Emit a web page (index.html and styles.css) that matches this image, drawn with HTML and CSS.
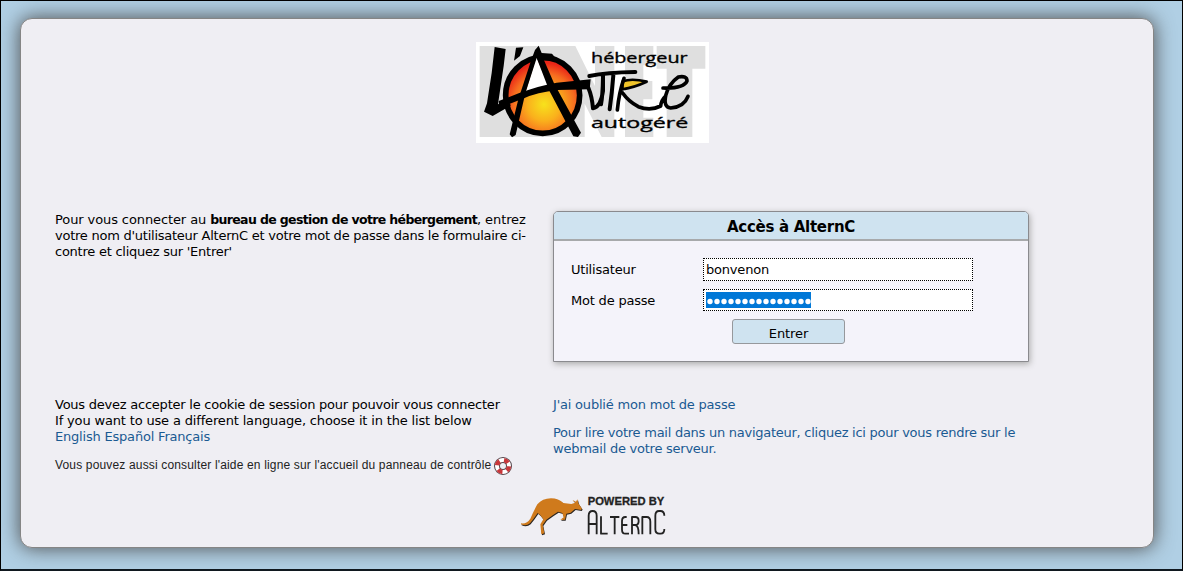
FILE: index.html
```html
<!DOCTYPE html>
<html lang="fr">
<head>
<meta charset="utf-8">
<title>Accès à AlternC</title>
<link rel="stylesheet" href="styles.css">
</head>
<body>
<main class="panel">
  <header class="brand">
    <svg class="logo" viewBox="18 18 699 303" role="img" aria-label="L'Autre Net">
      <defs>
        <radialGradient id="sun" gradientUnits="userSpaceOnUse" cx="222" cy="205" r="125">
          <stop offset="0" stop-color="#f7e21c"/><stop offset=".4" stop-color="#fab01c"/><stop offset=".75" stop-color="#f66b20"/><stop offset="1" stop-color="#e92517"/>
        </radialGradient>
      </defs>
      <path fill="#fff" d="M18 18h699v303H18z"/>
      <path fill="#dfdfdf" d="M29 30H316L375 150V30H433V303H395L344 203V303H29zM465 30H550V88H520V135H547V190H520V245H550V303H465zM560 30H706V98H667V303H590V98H560z"/>
      <ellipse cx="218" cy="178" rx="111" ry="114" fill="url(#sun)" stroke="#000" stroke-width="17"/>
      <path fill="#fff" d="M199 62L236 150L167 168z"/>
      <path d="M74 33L107 39L101 90L84 205L112 195L123 208L68 240L42 227L51 202L65 111zM138 35L160 34L150 60L132 74z"/>
      <path d="M184 71L195 42L206 29L215 51L246 53L262 73L222 73L252 142L333 290L324 303L310 301L238 164L200 66L166 172L137 297L126 304L119 295L145 190z"/>
      <path d="M86 195L146 172Q210 148 260 140L362 130L359 160L263 162Q200 169 162 187L88 216z"/>
      <g fill="none" stroke="#000" stroke-linecap="round" stroke-linejoin="round">
        <path stroke-width="12" d="M355 155Q366 181 369 217Q392 213 399 165V115M399 122Q398 180 393 205M358 120Q410 109 496 108M430 118Q426 170 419 220"/>
        <path fill="#efc329" stroke-width="8" d="M458 136Q485 126 530 137Q493 154 457 160z"/>
        <path stroke-width="11" d="M462 127Q447 170 442 222M458 171Q475 196 505 212Q541 226 572 210Q574 192 587 180M579 156Q641 158 651 135Q651 118 625 123Q596 143 587 179Q580 214 602 216Q642 213 654 181"/>
      </g>
      <g class="logo-text"><text x="363" y="80" textLength="290" lengthAdjust="spacingAndGlyphs">hébergeur</text><text x="363" y="276" textLength="292" lengthAdjust="spacingAndGlyphs">autogéré</text></g>
    </svg>
  </header>

  <section class="row login-row">
    <p class="intro"><span class="line l1">Pour vous connecter au <b>bureau de gestion de votre hébergement</b>, entrez</span><span class="line l2">votre nom d'utilisateur AlternC et votre mot de passe dans le formulaire ci-</span><span class="line l3">contre et cliquez sur 'Entrer'</span></p>
    <form class="card">
      <h1 class="card-title">Accès à AlternC</h1>
      <div class="fields">
        <label for="user">Utilisateur</label>
        <div class="input" id="user">bonvenon</div>
        <label class="pass-label" for="pass">Mot de passe</label>
        <div class="input" id="pass"><svg class="dots" viewBox="0 0 105 16" aria-label="15 caractères"><path d="M4 9.5h.01m6.99 0h.01m6.99 0h.01m6.99 0h.01m6.99 0h.01m6.99 0h.01m6.99 0h.01m6.99 0h.01m6.99 0h.01m6.99 0h.01m6.99 0h.01m6.99 0h.01m6.99 0h.01m6.99 0h.01m6.99 0h.01"/></svg></div>
      </div>
      <button class="submit" type="button">Entrer</button>
    </form>
  </section>

  <section class="row notes-row">
    <div class="notes">
      <p><span class="line l4">Vous devez accepter le cookie de session pour pouvoir vous connecter</span><span class="line l5">If you want to use a different language, choose it in the list below</span><span class="line l6"><a>English</a> <a>Español</a> <a>Français</a></span></p>
      <p class="help"><span>Vous pouvez aussi consulter l'aide en ligne sur l'accueil du panneau de contrôle</span>
        <svg class="buoy" viewBox="0 0 18 18"><circle cx="9" cy="9" r="6" fill="none" stroke="#54454b" stroke-width="6"/><circle cx="9" cy="9" r="6" fill="none" stroke="#fff" stroke-width="4"/><circle cx="9" cy="9" r="6" fill="none" stroke="#c8373b" stroke-width="4.4" stroke-dasharray="4.7 4.725" stroke-dashoffset="-2.4" transform="rotate(-20 9 9)"/></svg>
      </p>
    </div>
    <div class="links">
      <p><a class="line l7">J'ai oublié mon mot de passe</a></p>
      <p><a class="line l8">Pour lire votre mail dans un navigateur, cliquez ici pour vous rendre sur le</a><a class="line l9">webmail de votre serveur.</a></p>
    </div>
  </section>

  <footer class="powered">
    <svg class="powered-logo" viewBox="0 0 495 150" role="img" aria-label="Powered by AlternC">
      <defs><path id="roo" d="M33 102Q50 105 61 88Q71 65 82 45Q97 27 123 27Q146 27 160 41L184 44L196 40L187 31L198 37L202 30L205 42L216 58L213 62L195 59L182 70L169 73L165 91L151 91L161 84L157 71L144 67L129 77L109 91L98 107L103 132L94 135L91 105L100 90L91 78L83 71Q70 90 60 102Q48 112 33 105z"/></defs>
      <use href="#roo" x="2" y="4" fill="#2b2622"/><use href="#roo" y="1" fill="#cf7a1c"/>
      <text class="powered-text" x="233" y="48" textLength="230" lengthAdjust="spacingAndGlyphs">POWERED BY</text>
      <g fill="none" stroke="#222" stroke-width="5.5" stroke-linejoin="round">
        <path d="M236 136V80Q236 66 248 66Q260 66 260 80V136M236 105H260M273 82V134H293M300 84H328M314 84V136M350 84H346Q336 84 336 96V122Q336 134 346 134H357M336 108H352M366 136V84H376Q386 84 386 96Q386 108 376 108H366M376 108Q386 110 386 136M397 136V84H410Q421 84 421 98V136M463 80Q463 66 451 66H447Q436 66 436 80V121Q436 134 448 134H452Q463 134 463 120"/>
      </g>
    </svg>
  </footer>
</main>
</body>
</html>
```
FILE: styles.css
```css
* { box-sizing: border-box; }
body {
  margin: 0;
  height: 571px;
  padding: 17px 28px 0 19px;
  border: 1px solid #000;
  border-bottom: 2px solid #10181f;
  background: #b0cfe4;
  overflow: hidden;
  font: 13px/16px Verdana, "DejaVu Sans", sans-serif;
  letter-spacing: -.2px;
  color: #000;
}
p, h1 { margin: 0; }
a { color: #1a5a92; }
.panel {
  height: 530px;
  border: 1px solid #858585;
  border-radius: 12px;
  background: #efeef3;
  box-shadow: 0 0 20px #4c4c4c;
  padding: 23px 34px 0;
}
.brand { height: 169px; padding-left: 421px; }
.logo { display: block; width: 233px; height: 101px; }
.logo-text { font: 43px "Open Sans", sans-serif; letter-spacing: 0; stroke: #000; stroke-width: 1; }
.row { display: grid; grid-template-columns: 498px 476px; }
.line { display: block; width: max-content; white-space: nowrap; }
.l1 { letter-spacing: -.1px; }
.l1 b { font-size: 12.5px; letter-spacing: -.64px; }
.l2, .l3, .l9 { letter-spacing: -.245px; }
.l4 { letter-spacing: -.235px; }
.l5 { letter-spacing: -.16px; }
.l8 { letter-spacing: -.26px; }
.intro { padding-top: 1px; }
.login-row { height: 186px; }
.card {
  height: 151px;
  border: 1px solid #8a8a8e;
  border-radius: 5px 5px 0 0;
  background: #f4f3fa;
  box-shadow: 1px 2px 6px #aaa;
  overflow: hidden;
}
.card-title {
  height: 29px;
  padding-top: 1px;
  border-bottom: 2px solid #a7a9ab;
  background: #cfe3f0;
  font-size: 15px;
  line-height: 28px;
  letter-spacing: -.28px;
  text-align: center;
}
.fields {
  display: grid;
  grid-template-columns: 132px 270px;
  grid-template-rows: 23px 22px;
  row-gap: 8px;
  align-items: center;
  padding: 17px 0 0 17px;
}
.pass-label { padding-top: 2px; }
.input {
  height: 100%;
  padding: 3px 2px;
  border: 1px dotted #000;
  background: #fff;
}
.dots { display: block; width: 105px; height: 16px; margin-top: -1px; background: #0078d7; }
.dots path { fill: none; stroke: #fff; stroke-width: 5.4; stroke-linecap: round; }
.submit {
  display: block;
  width: 113px;
  height: 25px;
  margin: 8px 0 0 178px;
  padding: 5px 0 0;
  border: 1px solid #96989c;
  border-radius: 3px;
  background: #cfe3f0;
  font: inherit;
  letter-spacing: -.1px;
  color: #000;
}
.help {
  display: flex;
  gap: 3px;
  align-items: center;
  margin-top: 10px;
  font: 12px/20px "Liberation Sans", Arial, sans-serif;
  letter-spacing: .16px;
  color: #222;
}
.buoy { width: 18px; height: 18px; position: relative; top: 1px; }
.links p { margin-bottom: 12px; }
.powered { margin-top: 14px; padding-left: 455px; }
.powered-logo { display: block; width: 165px; height: 50px; }
.powered-text { font: bold 30px "Liberation Sans", Arial, sans-serif; letter-spacing: 0; fill: #222; stroke: #222; stroke-width: .8; }
```
